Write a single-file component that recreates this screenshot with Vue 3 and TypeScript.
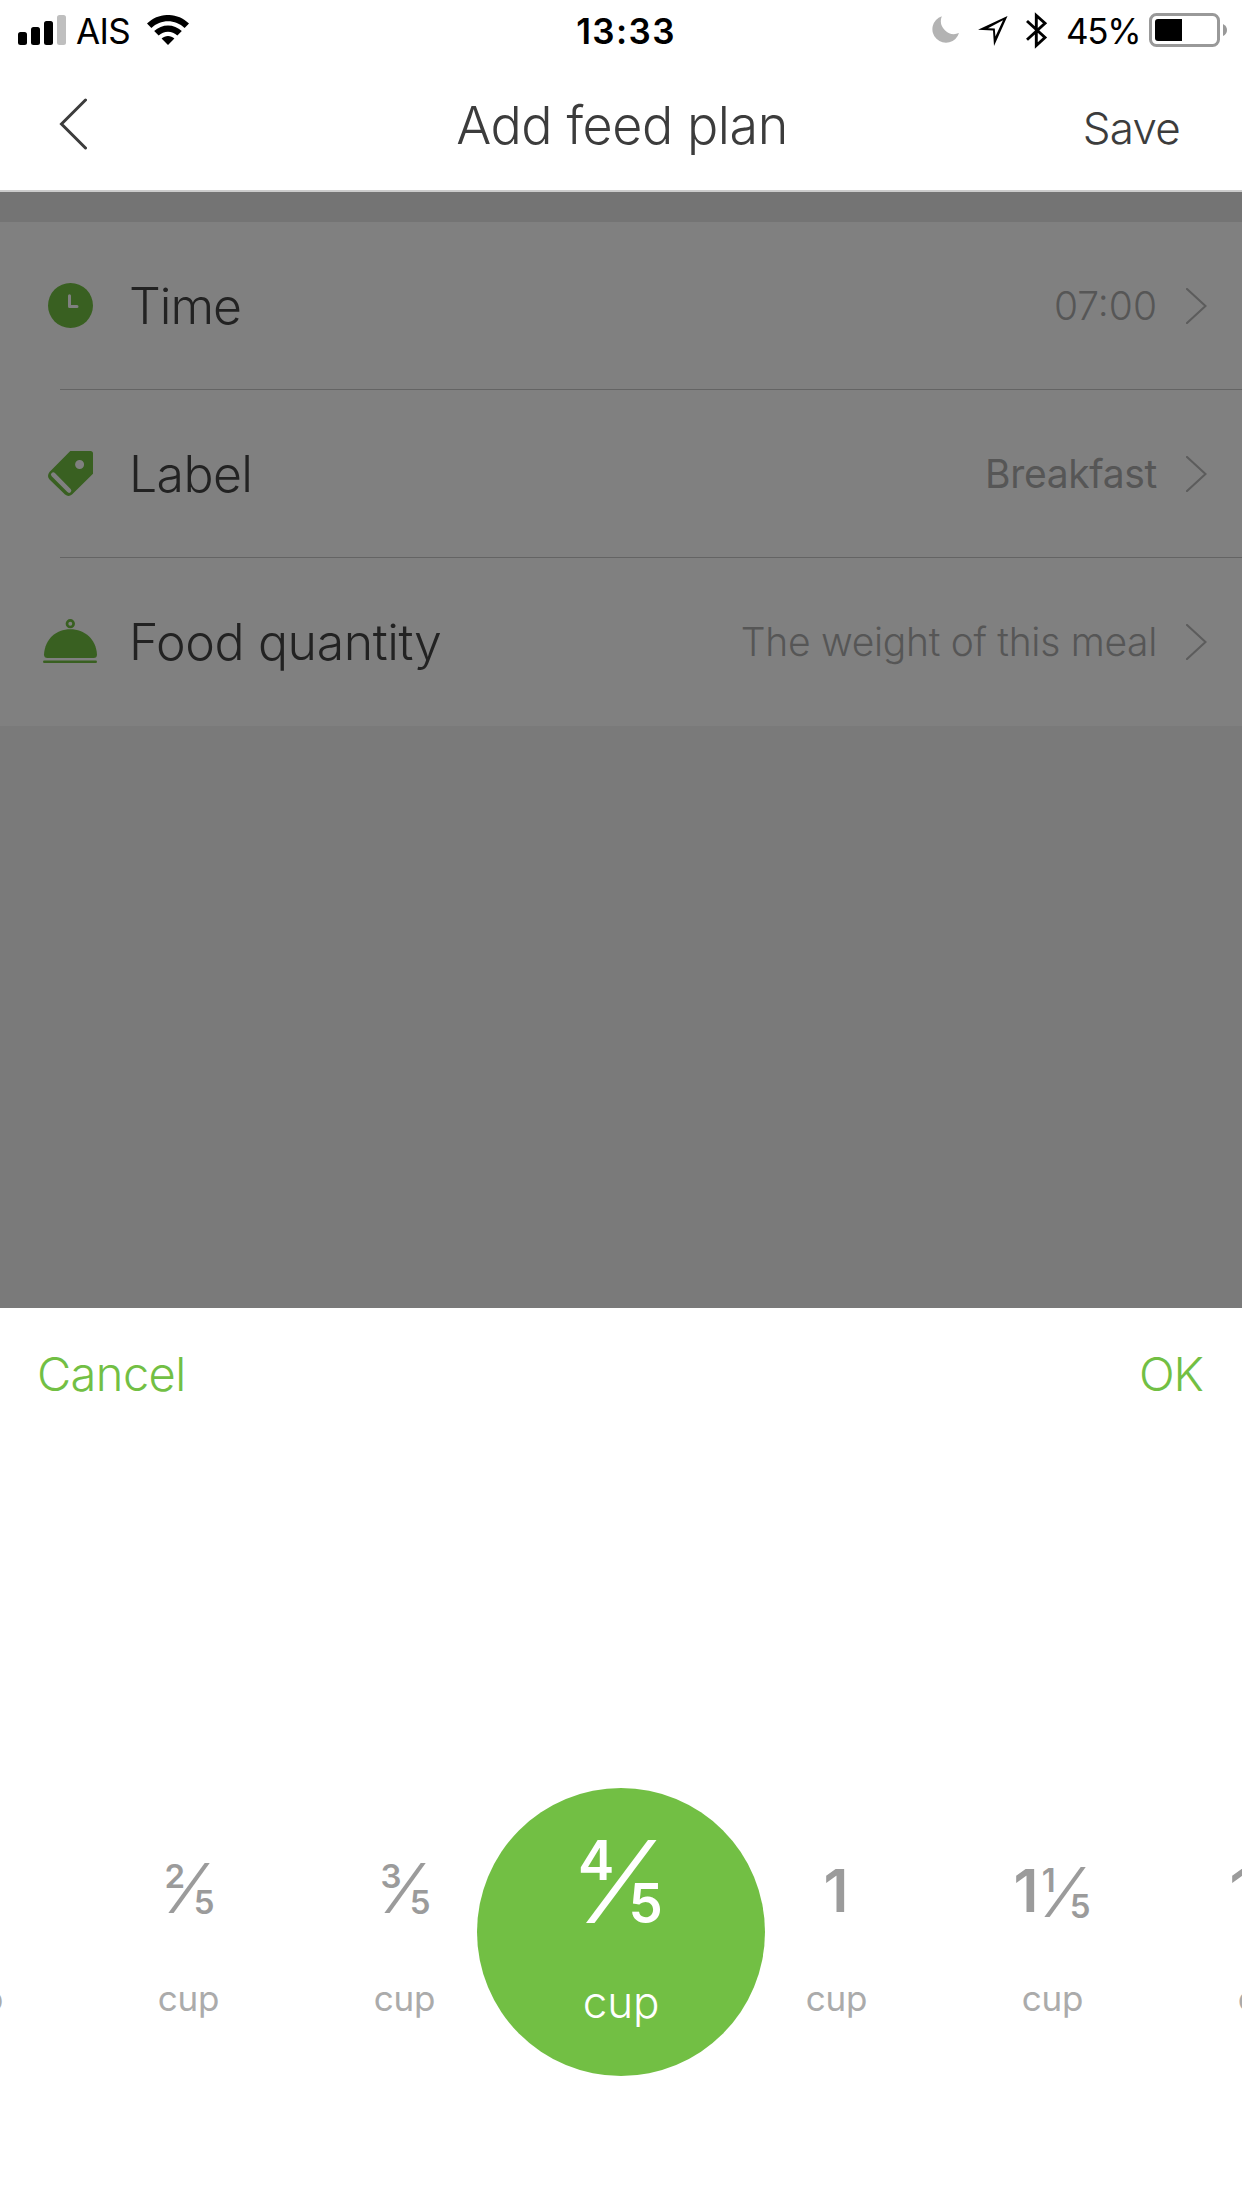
<script setup lang="ts">
interface Row {
  id: 'time' | 'label' | 'food'
  title: string
  value: string
}
interface Quantity {
  whole?: string
  top?: string
  bottom?: string
  active?: boolean
}

const rows: Row[] = [
  { id: 'time', title: 'Time', value: '07:00' },
  { id: 'label', title: 'Label', value: 'Breakfast' },
  { id: 'food', title: 'Food quantity', value: 'The weight of this meal' },
]

const quantities: Quantity[] = [
  {},
  { top: '2', bottom: '5' },
  { top: '3', bottom: '5' },
  { top: '4', bottom: '5', active: true },
  { whole: '1' },
  { whole: '1', top: '1', bottom: '5' },
  { whole: '1', top: '2', bottom: '5' },
]
</script>

<template>
  <div class="screen">
    <header class="top">
      <div class="status">
        <div class="status-side">
          <svg class="signal" width="48" height="30" viewBox="0 0 48 30">
            <rect x="0" y="17" width="9" height="13" rx="2.5" />
            <rect x="13" y="12" width="9" height="18" rx="2.5" />
            <rect x="26" y="6" width="9" height="24" rx="2.5" />
            <rect x="39" y="0" width="9" height="30" rx="2.5" fill="#bfbfbf" />
          </svg>
          <span class="carrier">AIS</span>
          <svg class="wifi" width="42" height="30" viewBox="0 0 42 30">
            <path d="M0 8.6C11.5-2.9 30.5-2.9 42 8.6L37.6 13C28.5 3.9 13.5 3.9 4.4 13Z" />
            <path d="M7.2 16.1C14.8 8.6 27.2 8.6 34.8 16.1L30.4 20.5C25.2 15.4 16.8 15.4 11.6 20.5Z" />
            <path d="M14.6 23.5C18.1 20 23.9 20 27.4 23.5L21 30Z" />
          </svg>
        </div>
        <span class="clock">13:33</span>
        <div class="status-side status-right">
          <svg class="moon" width="27" height="27" viewBox="0 0 27 27">
            <path d="M9.8 0.2A13.6 13.6 0 1 0 27 17.1A13.2 13.2 0 0 1 9.8 0.2Z" fill="#b3b3b3" />
          </svg>
          <svg class="location" width="30" height="30" viewBox="0 0 30 30">
            <path fill-rule="evenodd" d="M29.5 0L16 30L15 14.6L0 13.8ZM25 4.2L10 12.3L16.8 12.6L17.4 20.5Z" />
          </svg>
          <svg class="bluetooth" width="22" height="37" viewBox="0 0 22 37">
            <path d="M1 9L19 25.5L10.3 33.5V3.5L19 11.2L1 27.7" fill="none" stroke="#000" stroke-width="2.9" />
          </svg>
          <span class="percent">45%</span>
          <svg class="battery" width="78" height="34" viewBox="0 0 78 34">
            <rect x="1.5" y="1.5" width="68" height="31" rx="6" fill="none" stroke="#999" stroke-width="3" />
            <path d="M9 6H33V28H9Q6 28 6 25V9Q6 6 9 6Z" />
            <path d="M74 11Q78 13 78 17T74 23Z" fill="#999" />
          </svg>
        </div>
      </div>
      <nav class="nav">
        <svg class="back" width="28" height="52" viewBox="0 0 28 52">
          <path d="M26.5 2L2.5 26L26.5 50" fill="none" stroke="#3c3c3c" stroke-width="3" stroke-linecap="round" />
        </svg>
        <h1 class="title">Add feed plan</h1>
        <span class="save">Save</span>
      </nav>
    </header>

    <main class="dimmed">
      <div v-for="row in rows" :key="row.id" class="row">
        <div class="icon">
          <svg v-if="row.id === 'time'" width="45" height="45" viewBox="0 0 45 45">
            <circle cx="22.5" cy="22.5" r="22.5" fill="#396021" />
            <path d="M21.5 12.8V23.5H29" fill="none" stroke="#808080" stroke-width="3" stroke-linecap="round" stroke-linejoin="round" />
          </svg>
          <svg v-else-if="row.id === 'label'" width="45" height="46" viewBox="0 0 45 46">
            <path
              fill="#396021"
              fill-rule="evenodd"
              d="M22.3 0H42.5Q45 0 45 2.5V22.7L24 43.6Q20.5 46.5 17 43.6L1.5 28.5Q-1.5 25 1.5 21ZM31.6 9a4.5 4.5 0 1 0 0 9a4.5 4.5 0 1 0 0-9Z"
            />
            <path d="M5.3 23.7L21 39.5" stroke="#808080" stroke-width="4.6" stroke-linecap="round" />
          </svg>
          <svg v-else class="cloche" width="54" height="44" viewBox="0 0 54 44">
            <circle cx="27.3" cy="4.7" r="3.3" fill="none" stroke="#396021" stroke-width="2.7" />
            <path d="M1 35.5C2 20 13 10.3 27.3 10.3S53 20 54 35.5Q54 39 50.5 39H4.5Q1 39 1 35.5Z" fill="#396021" />
            <path d="M1.3 42.7H52.7" stroke="#396021" stroke-width="2.6" stroke-linecap="round" />
          </svg>
        </div>
        <span class="name" :class="row.id">{{ row.title }}</span>
        <span class="value" :class="row.id">{{ row.value }}</span>
        <svg class="chevron" width="21" height="36" viewBox="0 0 21 36">
          <path d="M1 1L19.5 18L1 35" fill="none" stroke="#5c5c5c" stroke-width="2.1" stroke-linecap="round" />
        </svg>
      </div>
    </main>

    <section class="sheet">
      <div class="actions">
        <span class="cancel">Cancel</span>
        <span class="ok">OK</span>
      </div>
      <div class="picker">
        <div v-for="(q, i) in quantities" :key="i" class="item" :class="{ active: q.active }">
          <div class="amount" :class="{ mixed: q.whole && q.top, single: q.whole && !q.top }">
            <span v-if="q.whole" class="whole">{{ q.whole }}</span>
            <svg v-if="q.active" class="fraction" width="82" height="84" viewBox="0 0 82 84">
              <text x="-2" y="39.5" font-size="54.5">{{ q.top }}</text>
              <path d="M68 0H76.5L14.5 83H6Z" fill="currentColor" />
              <text x="48.5" y="83.3" font-size="54.5">{{ q.bottom }}</text>
            </svg>
            <svg v-else-if="q.top" class="fraction" :class="{ 'after-whole': q.whole }" width="48" height="51" viewBox="0 0 48 51">
              <text :x="q.top === '1' ? 0.8 : -0.5" y="24.5" font-size="33">{{ q.top }}</text>
              <path d="M39.7 0H44.7L8.6 50H3.4Z" fill="currentColor" />
              <text x="28.7" y="50.5" font-size="33">{{ q.bottom }}</text>
            </svg>
          </div>
          <span class="unit">cup</span>
        </div>
      </div>
    </section>
  </div>
</template>

<style>
body {
  margin: 0;
}
</style>

<style scoped>
.screen {
  width: 1242px;
  height: 2208px;
  display: flex;
  flex-direction: column;
  overflow: hidden;
  background: #fff;
  font-family: Inter, 'Liberation Sans', sans-serif;
  white-space: nowrap;
}
svg {
  display: block;
  flex: none;
}
.top {
  height: 190px;
  border-bottom: 2px solid #ccc;
}
.status {
  height: 62px;
  display: flex;
  align-items: center;
  color: #000;
  font-size: 35px;
  line-height: 62px;
}
.status-side {
  flex: 1 1 0;
  display: flex;
  align-items: center;
}
.signal {
  margin-left: 18px;
  margin-top: -2px;
}
.carrier {
  margin-left: 10px;
  width: 71px;
  letter-spacing: -0.6px;
}
.wifi {
  margin-top: -2px;
}
.clock {
  margin-left: 10px;
  font-weight: 600;
  letter-spacing: 1.4px;
}
.status-right {
  justify-content: flex-end;
}
.moon {
  margin-right: 19px;
  margin-top: -3px;
}
.location {
  margin-right: 18px;
}
.bluetooth {
  margin-right: 18px;
  margin-top: -1px;
}
.percent {
  width: 83px;
  letter-spacing: -1.3px;
}
.battery {
  margin-right: 15px;
  margin-top: -2px;
}
.nav {
  height: 126px;
  display: grid;
  grid-template-columns: 1fr auto 1fr;
  align-items: center;
  color: #3c3c3c;
}
.back {
  margin-left: 59px;
  margin-top: -3px;
}
.title {
  margin: 0;
  padding: 2px 0 0 2px;
  font-size: 52px;
  font-weight: 300;
  line-height: 80px;
  letter-spacing: -0.45px;
}
.save {
  justify-self: end;
  margin-right: 62px;
  padding-top: 6px;
  font-size: 44px;
  font-weight: 300;
  line-height: 60px;
  letter-spacing: -0.8px;
}
.dimmed {
  height: 1086px;
  padding-top: 30px;
  background: linear-gradient(#747474 0 30px, #7a7a7a 30px);
}
.row {
  height: 168px;
  box-sizing: border-box;
  padding-bottom: 1px;
  display: flex;
  align-items: center;
  background: #808080 linear-gradient(#646464, #646464) no-repeat 60px 167px / 1182px 1px;
}
.row:last-child {
  background: #808080;
}
.icon {
  width: 129px;
  padding-left: 42px;
  padding-right: 30px;
  box-sizing: border-box;
  display: flex;
  justify-content: center;
  flex: none;
}
.cloche {
  margin-right: 1px;
  margin-top: -2px;
}
.name {
  padding-top: 1px;
  color: #222;
  font-size: 50px;
  font-weight: 300;
  letter-spacing: -0.4px;
}
.name.time {
  letter-spacing: -1px;
}
.name.label {
  letter-spacing: -0.6px;
}
.value {
  margin-left: auto;
  margin-right: 29px;
  padding-bottom: 1px;
  color: #565656;
  font-size: 39px;
  font-weight: 300;
}
.value.label {
  font-weight: 400;
  letter-spacing: -0.35px;
}
.value.food {
  letter-spacing: -0.3px;
}
.chevron {
  margin-right: 35px;
}
.sheet {
  height: 900px;
  background: #fff;
}
.actions {
  height: 130px;
  padding: 0 39px 2px 37px;
  display: flex;
  align-items: center;
  justify-content: space-between;
  color: #72bf44;
  font-size: 47px;
  font-weight: 300;
}
.cancel {
  letter-spacing: -0.6px;
}
.ok {
  letter-spacing: -1px;
}
.picker {
  margin-top: 348px;
  margin-left: -135px;
  width: 1512px;
  height: 288px;
  display: grid;
  grid-template-columns: repeat(7, 216px);
  justify-content: start;
  justify-items: center;
}
.item {
  width: 288px;
  display: flex;
  flex-direction: column;
  align-items: center;
  color: #9b9b9b;
  font-weight: 600;
}
.amount {
  height: 100px;
  padding-top: 50px;
  display: flex;
  align-items: center;
  justify-content: center;
}
.amount.single {
  padding-right: 2px;
}
.amount.mixed {
  gap: 3px;
  padding-right: 3px;
}
.whole {
  font-size: 59px;
  line-height: 80px;
  padding-top: 6px;
}
.fraction {
  overflow: visible;
}
.fraction text {
  fill: currentColor;
}
.after-whole {
  margin-top: 9px;
}
.unit {
  margin-top: 40px;
  padding-right: 1px;
  color: #ababab;
  font-size: 35px;
  font-weight: 400;
  line-height: 40px;
  letter-spacing: -0.2px;
}
.item.active {
  height: 288px;
  border-radius: 50%;
  background: #72bf44;
  color: #fff;
}
.active .amount {
  padding-top: 44px;
}
.active .unit {
  margin-top: 50px;
  padding-right: 0;
  color: #fff;
  font-size: 44px;
  font-weight: 300;
}
</style>
